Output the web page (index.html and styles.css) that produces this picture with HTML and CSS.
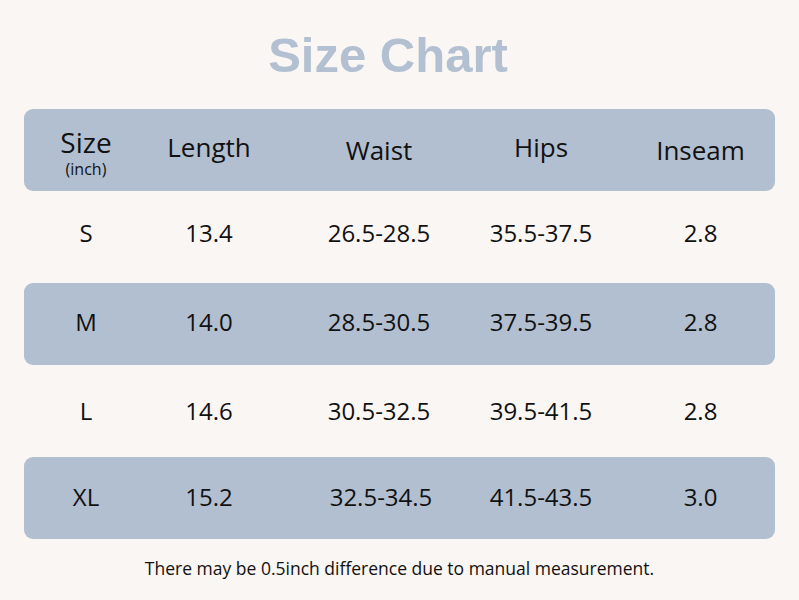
FILE: index.html
```html
<!DOCTYPE html>
<html>
<head>
<meta charset="utf-8">
<link rel="stylesheet" href="styles.css">
</head>
<body>
<div class="page">
  <h1 class="title">Size Chart</h1>
  <div class="table">
    <div class="row band head">
      <div class="cell size-head"><span class="size-word">Size</span><span class="unit">(inch)</span></div>
      <div class="cell length-h">Length</div>
      <div class="cell">Waist</div>
      <div class="cell hips-h">Hips</div>
      <div class="cell last">Inseam</div>
    </div>
    <div class="row plain first">
      <div class="cell">S</div>
      <div class="cell">13.4</div>
      <div class="cell">26.5-28.5</div>
      <div class="cell">35.5-37.5</div>
      <div class="cell last">2.8</div>
    </div>
    <div class="row band mid">
      <div class="cell">M</div>
      <div class="cell">14.0</div>
      <div class="cell">28.5-30.5</div>
      <div class="cell">37.5-39.5</div>
      <div class="cell last">2.8</div>
    </div>
    <div class="row plain">
      <div class="cell">L</div>
      <div class="cell">14.6</div>
      <div class="cell">30.5-32.5</div>
      <div class="cell">39.5-41.5</div>
      <div class="cell last">2.8</div>
    </div>
    <div class="row band">
      <div class="cell">XL</div>
      <div class="cell">15.2</div>
      <div class="cell xl-waist">32.5-34.5</div>
      <div class="cell">41.5-43.5</div>
      <div class="cell last">3.0</div>
    </div>
  </div>
  <p class="note">There may be 0.5inch difference due to manual measurement.</p>
</div>
</body>
</html>
```

FILE: styles.css
```css
html, body {
  margin: 0;
  padding: 0;
  background: #faf6f3;
}
.page {
  width: 799px;
  height: 600px;
  font-family: "Open Sans", "Noto Sans", sans-serif;
  color: #111;
  padding-top: 27px;
  box-sizing: border-box;
}
.title {
  margin: 0 23px 0 0;
  text-align: center;
  font-family: "Liberation Sans", Arial, sans-serif;
  font-weight: bold;
  font-size: 49px;
  line-height: 56px;
  color: #b3c0d1;
}
.table {
  margin: 26px 24px 0 24px;
  display: flex;
  flex-direction: column;
}
.row {
  display: grid;
  grid-template-columns: 124px 122px 218px 106px 181px;
  align-items: center;
  font-size: 24px;
  line-height: 30px;
  box-sizing: border-box;
}
.band {
  height: 82px;
  background: #b1bfd0;
  border-radius: 9px;
  padding-bottom: 2px;
}
.plain {
  height: 92px;
}
.plain.first {
  padding-bottom: 8px;
}
.band.mid {
  padding-bottom: 4px;
}
.cell {
  text-align: center;
}
.cell.last {
  padding-left: 32px;
}
.xl-waist {
  padding-left: 4px;
}
.head {
  font-size: 26px;
  padding-bottom: 0;
}
.size-head {
  display: flex;
  flex-direction: column;
  align-items: center;
  padding-top: 6px;
}
.size-word {
  font-size: 28px;
  line-height: 28px;
}
.unit {
  font-size: 16px;
  line-height: 18px;
  margin-top: 4px;
}
.length-h {
  margin-top: -6px;
}
.hips-h {
  margin-top: -6px;
}
.note {
  margin: 17px 0 0 0;
  text-align: center;
  font-size: 17.5px;
  line-height: 24px;
}
```
